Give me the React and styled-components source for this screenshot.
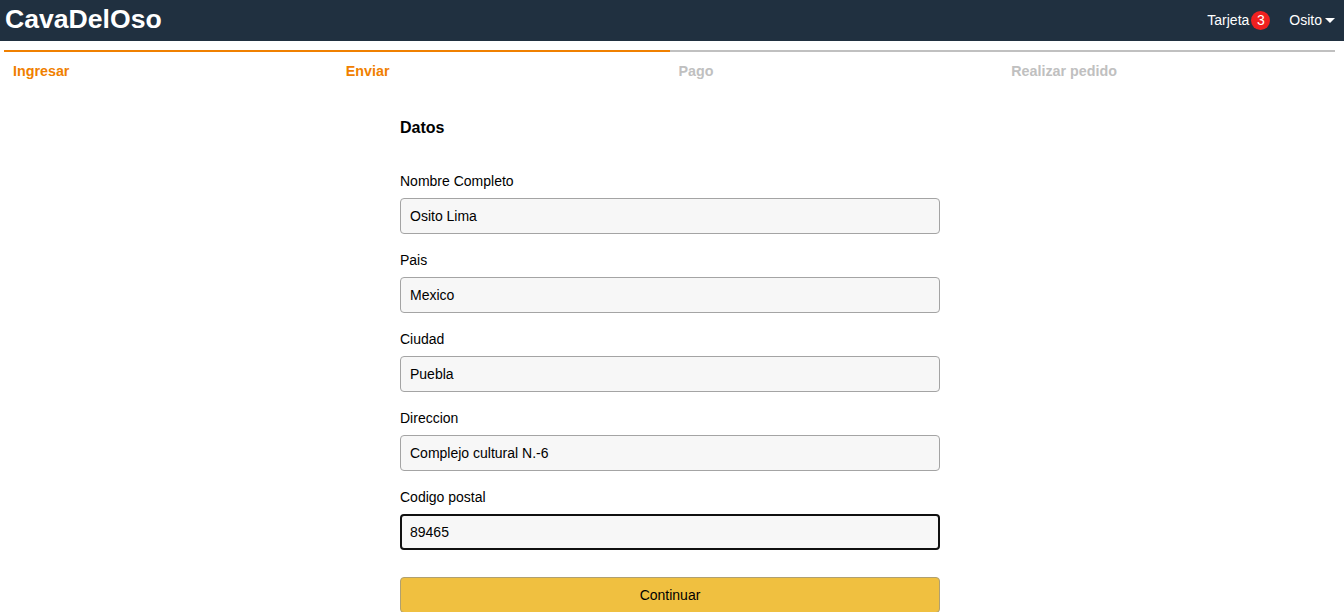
import React from 'react';
import styled, {createGlobalStyle} from 'styled-components';

const GlobalStyle = createGlobalStyle`
    html, body {
        margin: 0;
        padding: 0;
        background: #ffffff;
    }
    body {
        font-family: 'Liberation Sans', Arial, sans-serif;
        font-size: 14px;
        color: #000000;
    }
    * {
        box-sizing: border-box;
    }
`;

const steps = [
    {label: 'Ingresar', active: true},
    {label: 'Enviar', active: true},
    {label: 'Pago', active: false},
    {label: 'Realizar pedido', active: false}
];

const fields = [
    {id: 'fullName', label: 'Nombre Completo', value: 'Osito Lima'},
    {id: 'country', label: 'Pais', value: 'Mexico'},
    {id: 'city', label: 'Ciudad', value: 'Puebla'},
    {id: 'address', label: 'Direccion', value: 'Complejo cultural N.-6'},
    {id: 'postalCode', label: 'Codigo postal', value: '89465', focus: true}
];

const App = () => {
    return (
        <>
            <GlobalStyle />
            <Header>
                <Brand href="#">CavaDelOso</Brand>
                <NavLinks>
                    <NavLink href="#">
                        Tarjeta
                        <Badge>3</Badge>
                    </NavLink>
                    <NavLink href="#">
                        Osito
                        <Caret />
                    </NavLink>
                </NavLinks>
            </Header>
            <Main>
                <Steps>
                    {steps.map((s) =>
                        <Step key={s.label} $active={s.active}>{s.label}</Step>
                    )}
                </Steps>
                <Form onSubmit={(e) => e.preventDefault()}>
                    <Title>Datos</Title>
                    {fields.map((f) =>
                        <Field key={f.id}>
                            <Label htmlFor={f.id}>{f.label}</Label>
                            <Input
                                id={f.id}
                                type="text"
                                defaultValue={f.value}
                                autoFocus={f.focus}
                                $focus={f.focus}
                            />
                        </Field>
                    )}
                    <Submit type="submit">Continuar</Submit>
                </Form>
            </Main>
        </>
    )
}
export default App;

const Header = styled.header`
    align-items: center;
    background: #203040;
    display: flex;
    height: 41px;
    justify-content: space-between;
    padding: 0 9px 3px 5px;
`;
const Brand = styled.a`
    color: #ffffff;
    font-size: 26.6px;
    font-weight: bold;
    line-height: 30px;
    text-decoration: none;
`;
const NavLinks = styled.nav`
    align-items: center;
    display: flex;
    gap: 19px;
    margin-top: 2px;
`;
const NavLink = styled.a`
    align-items: center;
    color: #ffffff;
    display: flex;
    font-size: 14px;
    text-decoration: none;
`;
const Badge = styled.span`
    align-items: center;
    background: #f02020;
    border-radius: 50%;
    color: #ffffff;
    display: inline-flex;
    font-size: 14px;
    height: 19px;
    justify-content: center;
    margin-left: 2px;
    width: 19px;
`;
const Caret = styled.span`
    border-left: 5px solid transparent;
    border-right: 5px solid transparent;
    border-top: 5px solid #ffffff;
    display: inline-block;
    height: 0;
    margin-left: 3px;
    width: 0;
`;
const Main = styled.main`
    padding: 0 4px 0 0;
`;
const Steps = styled.div`
    display: flex;
    margin: 9px 5px 0 4px;
`;
const Step = styled.div`
    border-top: 2px solid ${(p) => p.$active ? '#f08000' : '#c0c0c0'};
    color: ${(p) => p.$active ? '#f08000' : '#c0c0c0'};
    flex: 1;
    font-size: 14.3px;
    font-weight: bold;
    line-height: 16px;
    padding: 11px 9px 0;
`;
const Form = styled.form`
    display: flex;
    flex-direction: column;
    margin: 40px auto 0;
    width: 540px;
`;
const Title = styled.h1`
    font-size: 16px;
    font-weight: bold;
    line-height: 18px;
    margin: 0 0 36px;
`;
const Field = styled.div`
    display: flex;
    flex-direction: column;
    margin-bottom: 18px;
`;
const Label = styled.label`
    font-size: 14px;
    line-height: 16px;
    margin-bottom: 9px;
`;
const Input = styled.input`
    background: #f7f7f7;
    border: 1px solid #a4a4a4;
    border-radius: 4px;
    color: #000000;
    font-family: 'Liberation Sans', Arial, sans-serif;
    font-size: 14px;
    height: 36px;
    outline: none;
    padding: 0 9px;
    ${(p) => p.$focus && `
        border: 2px solid #101010;
        padding: 0 8px;
    `}
`;
const Submit = styled.button`
    background: #f0c040;
    border: 1px solid #b0a070;
    border-radius: 4px;
    color: #000000;
    cursor: pointer;
    font-family: 'Liberation Sans', Arial, sans-serif;
    font-size: 14px;
    height: 36px;
    margin-top: 9px;
`;
